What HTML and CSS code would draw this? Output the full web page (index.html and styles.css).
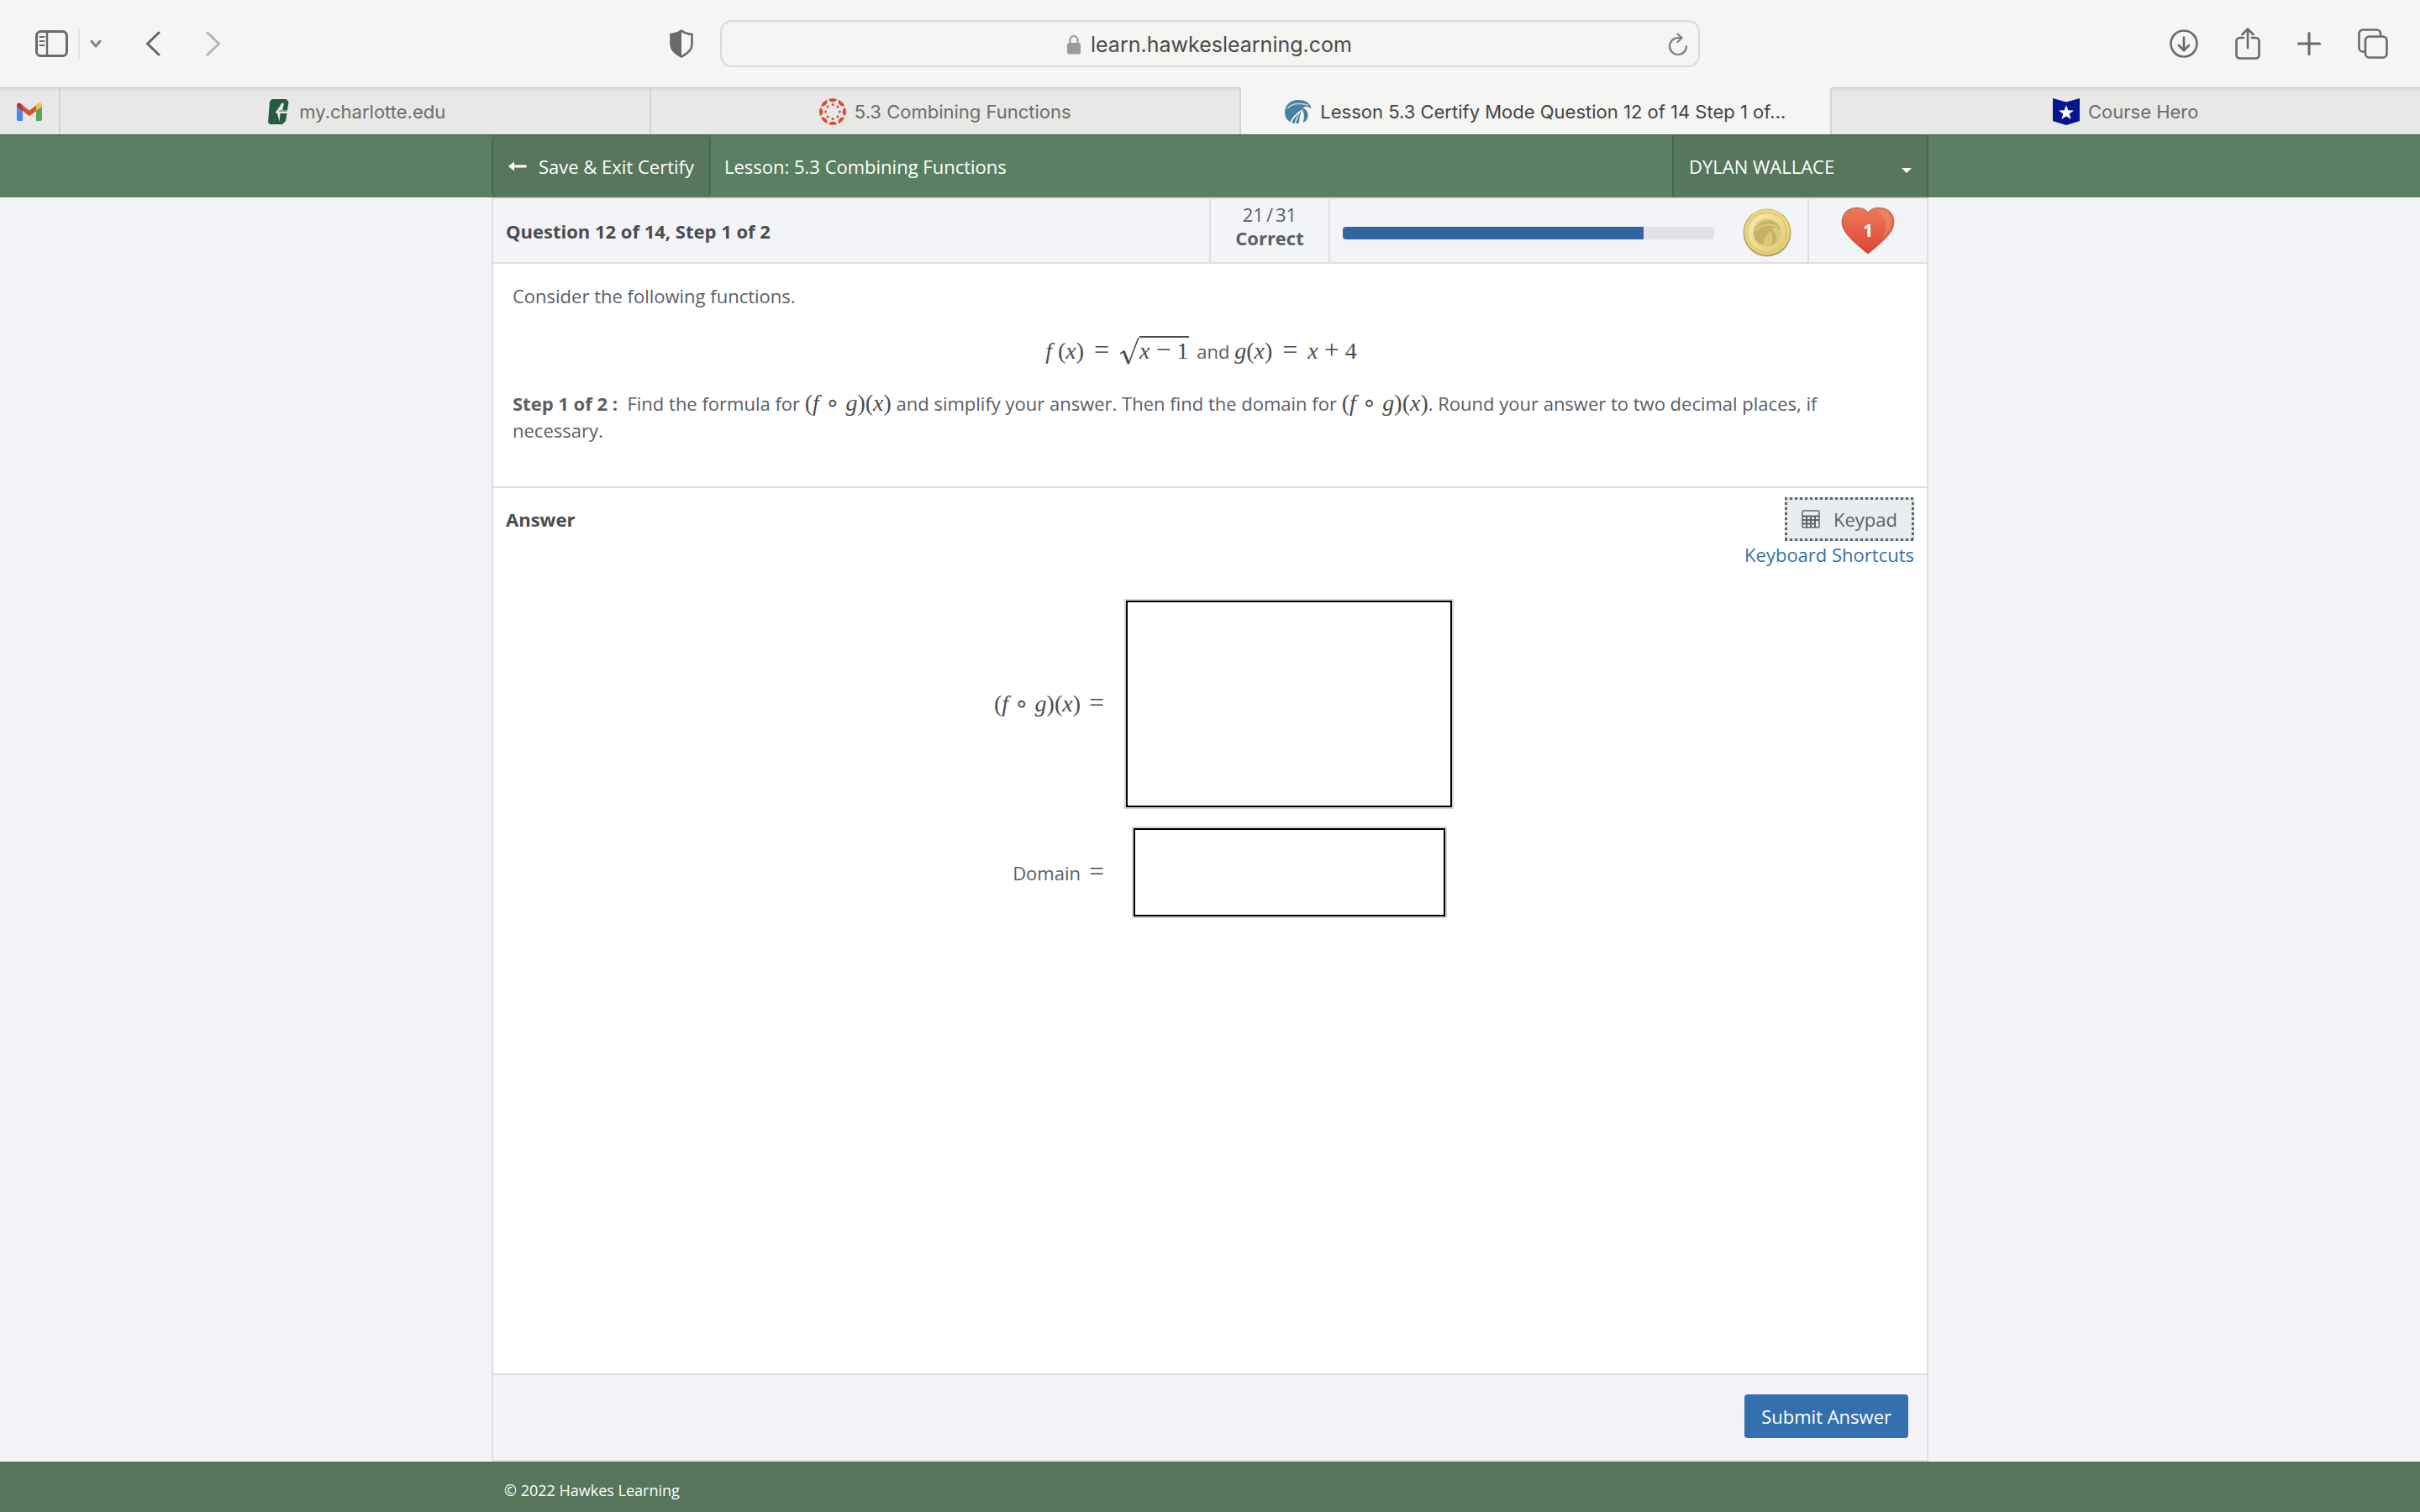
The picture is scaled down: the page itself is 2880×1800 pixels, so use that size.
FILE: index.html
```
<!DOCTYPE html>
<html lang="en">
<head>
<meta charset="utf-8">
<title>Lesson 5.3 Certify Mode Question 12 of 14 Step 1 of 2</title>
<link rel="stylesheet" href="styles.css">
</head>
<body>
<header class="browser">
  <div class="toolbar">
    <div class="tools tools-left">
      <button class="icon-btn" aria-label="Sidebar"><svg width="39" height="32" viewBox="0 0 39 32" fill="none" stroke="#6a6a68" stroke-width="3"><rect x="1.5" y="1.5" width="36" height="29" rx="5"/><path d="M14 2v28" stroke-width="2.4"/><path d="M5.500 8h5M5.500 13h5M5.500 18h5" stroke-width="2" stroke-linecap="round"/></svg></button>
      <span class="tool-divider"></span>
      <button class="icon-btn menu-btn" aria-label="Tab groups"><svg width="14" height="10" viewBox="0 0 14 10" fill="none" stroke="#858583" stroke-width="3" stroke-linecap="round" stroke-linejoin="round"><path d="M2 2l5 6 5-6"/></svg></button>
      <button class="icon-btn back-btn" aria-label="Back"><svg width="18" height="30" viewBox="0 0 18 30" fill="none" stroke="#646462" stroke-width="3" stroke-linecap="round" stroke-linejoin="round"><path d="M16 2L2.500 15 16 28"/></svg></button>
      <button class="icon-btn" aria-label="Forward"><svg width="18" height="30" viewBox="0 0 18 30" fill="none" stroke="#b5b5b3" stroke-width="3" stroke-linecap="round" stroke-linejoin="round"><path d="M2 2l13.500 13L2 28"/></svg></button>
      <button class="icon-btn shield-btn" aria-label="Privacy report"><svg width="28" height="34" viewBox="0 0 28 34"><path d="M14 1.500C10 5 6 5.500 1.500 6v12C1.500 25 8 29.500 14 32.500 20 29.500 26.500 25 26.500 18V6C22 5.500 18 5 14 1.500z" fill="none" stroke="#6a6a68" stroke-width="2.600"/><path d="M14 1.500C10 5 6 5.500 1.500 6v12C1.500 25 8 29.500 14 32.500z" fill="#6a6a68"/></svg></button>
    </div>
    <div class="address">
      <div class="location">
        <svg width="16" height="24" viewBox="0 0 16 24"><path d="M3.500 11V6.500a4.500 4.700 0 0 1 9 0V11" fill="none" stroke="#9b9b9a" stroke-width="2.200"/><rect y="10" width="16" height="13.500" rx="2.500" fill="#9b9b9a"/></svg>
        <input class="url" type="text" aria-label="Address" value="learn.hawkeslearning.com">
      </div>
      <button class="icon-btn reload" aria-label="Reload"><svg width="24" height="28" viewBox="0 0 24 28" fill="none" stroke="#7c7c7a" stroke-width="2.200" stroke-linecap="round" stroke-linejoin="round"><path d="M22 16a10 10 0 1 1-10-10h4"/><path d="M11.500 1.500L16.500 6l-5 5"/></svg></button>
    </div>
    <div class="tools tools-right">
      <button class="icon-btn" aria-label="Downloads"><svg width="34" height="34" viewBox="0 0 34 34" fill="none" stroke="#6a6a68" stroke-width="2.600" stroke-linecap="round" stroke-linejoin="round"><circle cx="17" cy="17" r="15.500"/><path d="M17 9.500v15M11 19l6 6 6-6"/></svg></button>
      <button class="icon-btn" aria-label="Share"><svg width="30" height="38" viewBox="0 0 30 38" fill="none" stroke="#6a6a68" stroke-width="2.600" stroke-linecap="round" stroke-linejoin="round"><path d="M10 12H5.500a4 4 0 0 0-4 4v16.500a4 4 0 0 0 4 4h19a4 4 0 0 0 4-4V16a4 4 0 0 0-4-4H20"/><path d="M15 24V2M8.500 8L15 1.500 21.500 8"/></svg></button>
      <button class="icon-btn" aria-label="New tab"><svg width="28" height="28" viewBox="0 0 28 28" fill="none" stroke="#6a6a68" stroke-width="3" stroke-linecap="round"><path d="M14 1.500v25M1.500 14h25"/></svg></button>
      <button class="icon-btn" aria-label="Show tabs"><svg width="36" height="36" viewBox="0 0 36 36" fill="none" stroke="#6a6a68" stroke-width="2.600"><path d="M8.500 27.500H6a4.500 4.500 0 0 1-4.500-4.500V6A4.500 4.500 0 0 1 6 1.500h16.500A4.500 4.500 0 0 1 27 6v2.500"/><rect x="9" y="9.500" width="25.500" height="25" rx="4.500"/></svg></button>
    </div>
  </div>
  <nav class="tabs" aria-label="Tabs">
    <a class="tab pinned" href="#" aria-label="Gmail"><svg width="30" height="22" viewBox="0 0 30 22"><path d="M0 3v17a2 2 0 0 0 2 2h5V9z" fill="#4f86ee"/><path d="M30 3v17a2 2 0 0 1-2 2h-5V9z" fill="#58a55c"/><path d="M7 3.500V10l8 6.200 8-6.200V3.500l-8 6z" fill="#d94f3d"/><path d="M0 3.500V5l7 5V3.500L5 1.500C3-.5 0 .5 0 3.500z" fill="#b5342b"/><path d="M30 3.500V5l-7 5V3.500l2-2c2-2 5-1 5 2z" fill="#f2bd42"/></svg></a>
    <a class="tab" href="#"><svg width="32" height="32" viewBox="0 0 32 32"><path d="M9.500 1h17l3 3-1.500 10h-6L24 6h-2.500L17 14.500h11L26 27l-4 4H7.500L5 29 7 4z" fill="#255a43"/><path d="M22.500 4L18 15.500h10.500v2.500h-9L18.500 28l-2.300-9.500-2.700-2L16 14z" fill="#e8e8e6"/></svg><span>my.charlotte.edu</span></a>
    <a class="tab" href="#"><svg width="32" height="32" viewBox="0 0 32 32"><g fill="#d84a38"><g id="seg"><path d="M11 1a15.800 15.800 0 0 1 10 0 5.200 4.600 0 0 1-10 0z"/><circle cx="16" cy="7.600" r="1.500"/></g><use href="#seg" transform="rotate(45 16 16)"/><use href="#seg" transform="rotate(90 16 16)"/><use href="#seg" transform="rotate(135 16 16)"/><use href="#seg" transform="rotate(180 16 16)"/><use href="#seg" transform="rotate(225 16 16)"/><use href="#seg" transform="rotate(270 16 16)"/><use href="#seg" transform="rotate(315 16 16)"/></g></svg><span>5.3 Combining Functions</span></a>
    <a class="tab active" href="#" aria-current="page"><svg width="32" height="32" viewBox="0 0 32 32"><path d="M0 17C0 8 7 2 16 2c8 0 14 3 15.500 10C26 9 23 9.500 21.500 12 26 13 28 17 27.500 22c-1 4-3 6-6 7 2-6 2-11-1-15.500C16 19 13 24 11.500 30 4.500 28.500 0 24 0 17z" fill="#47809f"/><path d="M3 12C9 6 18 5 28 8.500" fill="none" stroke="#b9d0dc" stroke-width="1.600"/><path d="M21 14C14 18 10 23 7 29" fill="none" stroke="#f5f5f3" stroke-width="2"/><path d="M20.500 13.500C18 20 17 25 17 29.500l-4 .5C15 24 17 18 20.500 13.500z" fill="#47809f"/></svg><span>Lesson 5.3 Certify Mode Question 12 of 14 Step 1 of…</span></a>
    <a class="tab" href="#"><svg width="32" height="32" viewBox="0 0 32 32"><path d="M0 0l16 4.500L32 0v27l-16 5-16-5z" fill="#04168f"/><path d="M16 8l2.300 6.300 6.700.2-5.300 4.100 1.900 6.400L16 21.200 10.400 25l1.900-6.400L7 14.500l6.700-.2z" fill="#fff"/></svg><span>Course Hero</span></a>
  </nav>
</header>

<div class="site-bar">
  <div class="container site-bar-inner">
    <button class="exit-btn"><svg width="22" height="12" viewBox="0 0 22 12" fill="#fff"><path d="M0 6l7-5.500v4h14.500v3H7v4z"/></svg>Save &amp; Exit Certify</button>
    <span class="lesson">Lesson: 5.3 Combining Functions</span>
    <button class="user-btn">DYLAN WALLACE<span class="caret"></span></button>
  </div>
</div>

<main class="container question">
  <div class="status">
    <h1 class="status-title">Question 12 of 14, Step 1 of 2</h1>
    <div class="score"><span>21<span class="slash">/</span>31</span><strong>Correct</strong></div>
    <div class="progress-cell">
      <div class="progress"><div class="progress-fill" style="width:81%"></div></div>
      <svg class="coin" width="58" height="58" viewBox="0 0 58 58"><defs><linearGradient id="gold" x1="0" y1="0" x2="1" y2="1"><stop offset="0" stop-color="#f7ebb0"/><stop offset="1" stop-color="#e2cb6c"/></linearGradient></defs><circle cx="29" cy="29" r="28.500" fill="#b9a765"/><circle cx="29" cy="28" r="27" fill="#e9d684"/><circle cx="29" cy="29" r="23.500" fill="url(#gold)" stroke="#d3bd65"/><circle cx="29" cy="29" r="16.500" fill="#d9c87a"/><path d="M13 29c2-9 9-14 18-14 7 0 13 4 14 11-6-4-9-4-11-1 5 2 7 7 5 14-1 3-3 4-5 5 2-7 2-12-1-17-5 4-8 10-9 17-7-2-11-8-11-15z" fill="#c4b266"/><path d="M15 27c6-7 15-10 27-5" fill="none" stroke="#dccb80" stroke-width="2"/></svg>
    </div>
    <div class="lives">
      <svg width="64" height="56" viewBox="0 0 64 56"><defs><linearGradient id="red" x1="0" y1="0" x2="0" y2="1"><stop offset="0" stop-color="#ee7a5a"/><stop offset="1" stop-color="#dc4435"/></linearGradient></defs><path d="M32 6C27-1 14-1 7 4-1 11 0 22 5 29 10 37 22 47 32 55 42 47 54 37 59 29c5-7 6-18-2-25C50-1 37-1 32 6z" fill="url(#red)" stroke="#b4564a"/><path d="M44 3c10 0 16 6 16 15 0 8-5 14-11 18 6-9 7-21-5-33z" fill="#f09a78" opacity=".45"/><text class="lives-count" x="32" y="35" text-anchor="middle">1</text></svg>
    </div>
  </div>

  <section class="prompt">
    <p>Consider the following functions.</p>
    <p class="formula"><span class="math"><i>f</i> (<i>x</i>)<span class="rel">=</span><span class="root"><svg width="24" height="34" viewBox="0 0 24 34"><path d="M1 19l5-3 5.500 14L22.500 1H24" fill="none" stroke="#4c4c4c" stroke-width="1.600"/><path d="M5.500 17l5.500 14" stroke="#4c4c4c" stroke-width="2.600"/></svg><span class="radicand"><i>x</i><span class="bin">−</span>1</span></span></span> and <span class="math"><i>g</i>(<i>x</i>)<span class="rel">=</span><i>x</i><span class="bin">+</span>4</span></p>
    <p><strong>Step 1 of 2 :</strong>&nbsp; Find the formula for <span class="math">(<i>f</i><span class="ring">∘</span><i>g</i>)(<i>x</i>)</span> and simplify your answer. Then find the domain for <span class="math">(<i>f</i><span class="ring">∘</span><i>g</i>)(<i>x</i>)</span>. Round your answer to two decimal places, if necessary.</p>
  </section>

  <section class="answer">
    <div class="answer-head">
      <h2 class="answer-title">Answer</h2>
      <div class="answer-tools">
        <button class="keypad-btn"><svg width="22" height="22" viewBox="0 0 22 22" fill="none" stroke="#5f6569" stroke-width="1.500"><rect x="1" y="1" width="20" height="20" rx="1.500"/><path d="M1 7.500h20M1 12h20M1 16.500h14M6 7.500V21M11 7.500V21M16 7.500V21" stroke-width="2"/></svg>Keypad</button>
        <a class="shortcuts" href="#">Keyboard Shortcuts</a>
      </div>
    </div>
    <form class="fields" id="answer-form">
      <label for="composite"><span class="math">(<i>f</i><span class="ring">∘</span><i>g</i>)(<i>x</i>)<span class="eq">=</span></span></label>
      <textarea class="field field-large" id="composite"></textarea>
      <label for="domain">Domain<span class="math"><span class="eq">=</span></span></label>
      <input class="field field-small" id="domain" type="text">
    </form>
  </section>

  <div class="actions"><button class="submit-btn" type="submit" form="answer-form">Submit Answer</button></div>
</main>

<footer class="site-footer"><div class="container footer-inner">© 2022 Hawkes Learning</div></footer>
</body>
</html>
```
FILE: styles.css
```
* { box-sizing: border-box; }

body {
  margin: 0;
  min-height: 100vh;
  display: flex;
  flex-direction: column;
  background: #f3f4f7;
  color: #5a6065;
  font: 22px/32px "Open Sans", sans-serif;
}

button, input, textarea { font: inherit; color: inherit; }
button { border: 0; padding: 0; background: none; cursor: pointer; }
svg { display: block; flex: none; }
a { text-decoration: none; }
p, h1, h2 { margin: 0; font-size: 22px; }

/* Browser chrome */
.browser { background: #f5f5f3; font-family: Inter, sans-serif; }
.toolbar {
  display: grid;
  grid-template-columns: minmax(0, 1fr) minmax(0, 1166px) minmax(0, 1fr);
  align-items: center;
  height: 104px;
}
.tools { display: flex; align-items: center; }
.tools-left { padding: 0 32px 0 42px; }
.tools-right { justify-content: flex-end; gap: 44px; padding-right: 38px; }
.tool-divider { width: 2px; height: 36px; margin: 0 12px; background: #e4e4e2; }
.menu-btn { margin-right: 52px; }
.back-btn { margin-right: 54px; }
.shield-btn { margin-left: auto; }
.address {
  display: grid;
  grid-template-columns: 1fr auto 1fr;
  align-items: center;
  height: 56px;
  padding: 2px 12px 0;
  border: 2px solid #dadad8;
  border-radius: 14px;
}
.location { grid-column: 2; display: flex; align-items: center; gap: 12px; }
.reload { justify-self: end; }
.url {
  width: 312px;
  padding: 0;
  border: 0;
  background: none;
  color: #4a4a49;
  font-size: 25px;
}

.tabs { display: flex; height: 56px; }
.tab {
  flex: 1;
  display: flex;
  align-items: center;
  justify-content: center;
  gap: 10px;
  min-width: 0;
  border-right: 2px solid #d3d3d1;
  border-top: 1px solid #c2c2c0;
  background: linear-gradient(#dededc, #e8e8e6 6px);
  color: #6d6d6c;
  white-space: nowrap;
}
.tab.pinned { flex: 0 0 72px; }
.tab.active { background: #f5f5f3; border-top-color: #f5f5f3; color: #444; }
.tab:last-child { border-right: 0; }

/* Site header */
.container { width: calc(100% - 64px); max-width: 1710px; margin: 0 auto; }
.site-bar { background: #5b8061; border-top: 1px solid #315a39; color: #fff; }
.site-bar-inner { display: flex; height: 74px; align-items: stretch; }
.exit-btn {
  display: flex;
  align-items: center;
  gap: 14px;
  padding: 0 18px;
  background: #57765b;
  border: 2px solid #48664c;
  border-top: 0;
  border-bottom: 0;
  border-radius: 6px;
}
.lesson { align-self: center; padding-left: 16px; }
.user-btn {
  display: flex;
  align-items: center;
  justify-content: space-between;
  width: 305px;
  margin-left: auto;
  padding: 0 18px;
  background: #57765b;
  border: 2px solid #48664c;
  border-top: 0;
  border-bottom: 0;
}
.caret {
  margin-top: 10px;
  border: 6px solid transparent;
  border-top-color: #fff;
  border-bottom: 0;
}

/* Question card */
.question {
  flex: 1;
  display: flex;
  flex-direction: column;
  border: 2px solid #dfdfe0;
  background: #fff;
}
.status {
  display: flex;
  align-items: stretch;
  height: 77px;
  background: #f3f4f7;
  border-bottom: 2px solid #dfdfe0;
}
.status-title { flex: 1; align-self: center; padding-left: 15px; color: #4a4c50; font-weight: 700; }
.score {
  display: flex;
  flex-direction: column;
  align-items: center;
  width: 144px;
  padding-top: 4px;
  border: 2px solid #dfdfe0;
  border-top: 0;
  border-bottom: 0;
  line-height: 28px;
}
.slash { margin: 0 3px; }
.progress-cell {
  flex: 0 1 570px;
  display: flex;
  align-items: center;
  gap: 34px;
  padding: 0 19px 0 15px;
  border-right: 2px solid #dfdfe0;
}
.progress { flex: 1; height: 15px; margin-top: 6px; border-radius: 4px; overflow: hidden; background: #e1e2e6; }
.progress-fill { height: 100%; background: #3065a0; }
.coin { margin-top: 4px; }
.lives { display: flex; align-items: center; justify-content: center; width: 140px; }
.lives-count { fill: #fff; font: 700 22px "Open Sans", sans-serif; }

.prompt { padding: 22px 44px 51px 23px; border-bottom: 2px solid #dfdfe0; }
.formula { margin: 32px 0 28px; text-align: center; }
.math { color: #4c4c4c; font: 28px/28px "Liberation Serif", serif; white-space: nowrap; }
.rel, .eq, .bin { font-size: 32px; }
.rel { margin: 0 12px; }
.bin { margin: 0 7px; }
.ring { display: inline-block; margin: 0 7px; font: 28px/20px "DejaVu Sans", sans-serif; }
.eq { margin-left: 10px; }
.root { margin-right: 4px; }
.root svg { display: inline-block; vertical-align: -9px; }
.radicand { display: inline-block; border-top: 2px solid #4c4c4c; }

.answer { flex: 1; padding: 11px 15px; }
.answer-head { display: flex; align-items: flex-start; justify-content: space-between; }
.answer-title { line-height: 52px; color: #4a4c50; font-weight: 700; }
.answer-tools { display: flex; flex-direction: column; align-items: flex-end; }
.keypad-btn {
  --dots-x: repeating-linear-gradient(90deg, #5f6569 0 3px, #d9dfe3 3px 6px);
  --dots-y: repeating-linear-gradient(#5f6569 0 3px, #d9dfe3 3px 6px);
  display: flex;
  align-items: center;
  gap: 16px;
  height: 52px;
  padding: 0 20px;
  background:
    var(--dots-x) 0 0 / 100% 3px no-repeat,
    var(--dots-x) 0 100% / 100% 3px no-repeat,
    var(--dots-y) 0 0 / 3px 100% no-repeat,
    var(--dots-y) 100% 0 / 3px 100% no-repeat,
    #e9edf0;
}
.shortcuts { color: #3470af; }

.fields {
  display: grid;
  grid-template-columns: auto auto;
  justify-content: center;
  align-items: center;
  gap: 21px 24px;
  margin-top: 37px;
  padding-left: 33px;
}
.fields label { text-align: right; }
.field {
  display: block;
  margin: 2px;
  border: 2px solid #000;
  border-radius: 0;
  outline: 2px solid #d3d3d3;
  background: #fff;
  resize: none;
}
.field-large { width: 388px; height: 246px; }
.field-small { width: 371px; height: 105px; justify-self: center; }

.actions {
  display: flex;
  justify-content: flex-end;
  padding: 23px 22px 26px;
  background: #f3f4f7;
  border-top: 2px solid #dfdfe0;
}
.submit-btn {
  height: 52px;
  padding: 0 20px;
  border-radius: 4px;
  background: #3470af;
  color: #fff;
}

.site-footer { background: #57765b; color: #fff; }
.footer-inner { padding: 22px 15px 14px; font-size: 18px; line-height: 24px; }
```
